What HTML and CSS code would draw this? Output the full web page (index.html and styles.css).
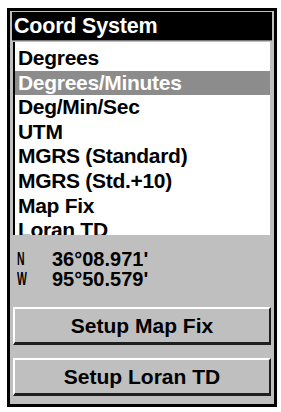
FILE: index.html
```html
<!DOCTYPE html>
<html lang="en">
<head>
    <meta charset="UTF-8">
    <meta name="viewport" content="width=device-width, initial-scale=1.0">
    <title>Coord System</title>
    <link rel="stylesheet" href="styles.css">
</head>
<body>
    <div class="frame">
        <div class="title-bar">Coord System</div>

        <ul class="coord-list">
            <li>Degrees</li>
            <li class="selected">Degrees/Minutes</li>
            <li>Deg/Min/Sec</li>
            <li>UTM</li>
            <li>MGRS (Standard)</li>
            <li>MGRS (Std.+10)</li>
            <li>Map Fix</li>
            <li>Loran TD</li>
        </ul>

        <div class="position">
            <div class="pos-row"><span class="hemi">N</span><span class="pos-value">36°08.971'</span></div>
            <div class="pos-row"><span class="hemi">W</span><span class="pos-value">95°50.579'</span></div>
        </div>

        <button class="setup-button first">Setup Map Fix</button>
        <button class="setup-button">Setup Loran TD</button>
    </div>
</body>
</html>
```

FILE: styles.css
```css
:root {
    --panel-color: #bfbfbf;
    --select-color: #8c8c8c;
    --dark-edge: #1e1e1e;
}

body {
    margin: 0;
    padding: 0;
    background: #fff;
    font-family: 'Liberation Sans', Arial, sans-serif;
    font-weight: bold;
    color: #000;
}

.frame {
    margin: 8px 0 0 7px;
    width: 270px;
    height: 399px;
    box-sizing: border-box;
    border: 3px solid #000;
    background: var(--panel-color);
    display: flex;
    flex-direction: column;
    overflow: hidden;
}

.title-bar {
    margin: 1px 2px 0 2px;
    height: 28px;
    line-height: 29px;
    padding-left: 2px;
    background: #000;
    color: #fff;
    font-size: 21.5px;
    letter-spacing: -0.2px;
    border-bottom: 1px solid #777;
}

.coord-list {
    list-style: none;
    margin: 1px 4px 0 3px;
    padding: 4px 0 0 0;
    height: 189px;
    overflow: hidden;
    background: #fff;
    border-left: 2px solid #000;
}

.coord-list li {
    height: 24.6px;
    line-height: 24px;
    padding-left: 3px;
    font-size: 21px;
    letter-spacing: -0.3px;
    white-space: nowrap;
}

.coord-list li.selected {
    background: var(--select-color);
    color: #fff;
}

.position {
    padding: 14px 0 0 7px;
}

.pos-row {
    display: flex;
    align-items: center;
    height: 20px;
    line-height: 20px;
    font-size: 20px;
    overflow: hidden;
}

.hemi {
    display: inline-block;
    width: 35px;
    height: 20px;
    line-height: 20px;
    font-size: 19px;
    transform: scaleX(0.55);
    transform-origin: left center;
}

.setup-button {
    margin: 18px 3px 0 3px;
    height: 38px;
    background: var(--panel-color);
    border-top: 2px solid #fff;
    border-left: 2px solid #fff;
    border-right: 2px solid var(--dark-edge);
    border-bottom: 3px solid var(--dark-edge);
    font-family: 'Liberation Sans', Arial, sans-serif;
    font-weight: bold;
    font-size: 21px;
    color: #000;
    padding: 0;
    text-align: center;
}

.setup-button + .setup-button {
    margin-top: 13px;
}
```
